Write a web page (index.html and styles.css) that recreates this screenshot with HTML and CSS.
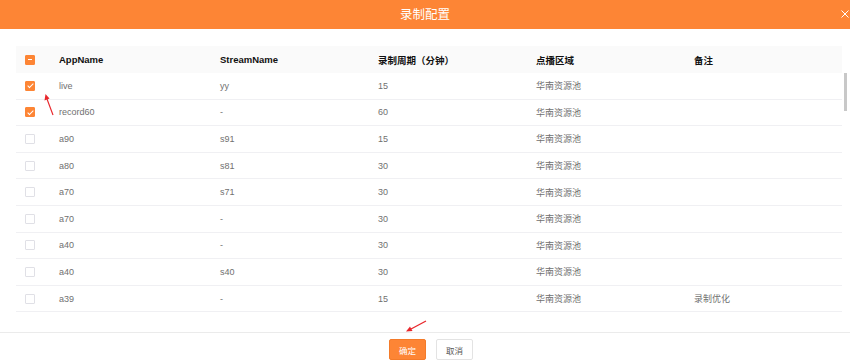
FILE: index.html
```html
<!DOCTYPE html>
<html lang="zh-CN">
<head>
    <meta charset="UTF-8">
    <meta name="viewport" content="width=device-width, initial-scale=1.0">
    <title>录制配置</title>
    <link rel="stylesheet" href="styles.css">
</head>
<body>
    <div class="dialog">
        <header class="dialog-header">
            <h1>录制配置</h1>
            <svg class="close" width="8" height="8" viewBox="0 0 8 8">
                <path d="M0.5 0.5 L7.5 7.5 M7.5 0.5 L0.5 7.5" stroke="#fff" stroke-width="1"/>
            </svg>
        </header>
        <main class="dialog-body">
            <div class="table">
                <div class="row head">
                    <div class="cell"><span class="box partial"></span></div>
                    <div class="cell">AppName</div>
                    <div class="cell">StreamName</div>
                    <div class="cell">录制周期（分钟）</div>
                    <div class="cell">点播区域</div>
                    <div class="cell">备注</div>
                </div>
                <div class="row">
                    <div class="cell"><span class="box checked"></span></div>
                    <div class="cell">live</div>
                    <div class="cell">yy</div>
                    <div class="cell">15</div>
                    <div class="cell">华南资源池</div>
                    <div class="cell"></div>
                </div>
                <div class="row">
                    <div class="cell"><span class="box checked"></span></div>
                    <div class="cell">record60</div>
                    <div class="cell">-</div>
                    <div class="cell">60</div>
                    <div class="cell">华南资源池</div>
                    <div class="cell"></div>
                </div>
                <div class="row">
                    <div class="cell"><span class="box"></span></div>
                    <div class="cell">a90</div>
                    <div class="cell">s91</div>
                    <div class="cell">15</div>
                    <div class="cell">华南资源池</div>
                    <div class="cell"></div>
                </div>
                <div class="row">
                    <div class="cell"><span class="box"></span></div>
                    <div class="cell">a80</div>
                    <div class="cell">s81</div>
                    <div class="cell">30</div>
                    <div class="cell">华南资源池</div>
                    <div class="cell"></div>
                </div>
                <div class="row">
                    <div class="cell"><span class="box"></span></div>
                    <div class="cell">a70</div>
                    <div class="cell">s71</div>
                    <div class="cell">30</div>
                    <div class="cell">华南资源池</div>
                    <div class="cell"></div>
                </div>
                <div class="row">
                    <div class="cell"><span class="box"></span></div>
                    <div class="cell">a70</div>
                    <div class="cell">-</div>
                    <div class="cell">30</div>
                    <div class="cell">华南资源池</div>
                    <div class="cell"></div>
                </div>
                <div class="row">
                    <div class="cell"><span class="box"></span></div>
                    <div class="cell">a40</div>
                    <div class="cell">-</div>
                    <div class="cell">30</div>
                    <div class="cell">华南资源池</div>
                    <div class="cell"></div>
                </div>
                <div class="row">
                    <div class="cell"><span class="box"></span></div>
                    <div class="cell">a40</div>
                    <div class="cell">s40</div>
                    <div class="cell">30</div>
                    <div class="cell">华南资源池</div>
                    <div class="cell"></div>
                </div>
                <div class="row">
                    <div class="cell"><span class="box"></span></div>
                    <div class="cell">a39</div>
                    <div class="cell">-</div>
                    <div class="cell">15</div>
                    <div class="cell">华南资源池</div>
                    <div class="cell">录制优化</div>
                </div>
                <div class="scrollbar"></div>
            </div>
        </main>
        <footer class="dialog-footer">
            <button class="btn primary">确定</button>
            <button class="btn">取消</button>
        </footer>
        <!-- red annotation arrows -->
        <svg class="marks" width="850" height="363" viewBox="0 0 850 363">
            <g stroke="#e8262b" stroke-width="1.2" fill="#e8262b">
                <line x1="53" y1="115" x2="47" y2="99"/>
                <polygon points="45.5,94 44.5,100.5 49.5,98.5" stroke="none"/>
                <line x1="426" y1="321" x2="411" y2="329"/>
                <polygon points="406,331.5 410,326.5 412.5,331" stroke="none"/>
            </g>
        </svg>
    </div>
</body>
</html>
```

FILE: styles.css
```css
body {
    margin: 0;
    font-family: "Liberation Sans", "Noto Sans CJK SC", sans-serif;
    background: #fff;
}
.dialog {
    position: relative;
    width: 850px;
    height: 363px;
    overflow: hidden;
}
.dialog-header {
    height: 29px;
    background-color: #fd8535;
    display: flex;
    align-items: center;
    justify-content: center;
    position: relative;
}
.dialog-header h1 {
    margin: 0 0 3px 0;
    color: #fff;
    font-size: 12.5px;
    font-weight: normal;
}
.close {
    position: absolute;
    right: 1px;
    top: 10px;
}
.dialog-body {
    height: 286px;
    padding: 17px 8px 0 16px;
    border-bottom: 1px solid #ebebeb;
}
.table {
    position: relative;
}
.row {
    display: grid;
    grid-template-columns: 43px 161px 158px 158px 158px 1fr;
    align-items: center;
    height: 25.6px;
    border-bottom: 1px solid #f0f0f3;
    font-size: 9px;
    color: #707070;
}
.row.head {
    height: 27px;
    border-bottom: none;
    background: #fafafa;
    color: #111;
    font-weight: bold;
    font-size: 9.5px;
}
.cell {
    white-space: nowrap;
}
.box {
    display: block;
    box-sizing: border-box;
    width: 10px;
    height: 10px;
    margin-left: 9px;
    border: 1px solid #e0e0e6;
    border-radius: 1px;
    background: #fff;
    position: relative;
}
.box.checked,
.box.partial {
    background: #fd8535;
    border-color: #fd8535;
}
.box.checked::after {
    content: "";
    position: absolute;
    left: 2.5px;
    top: 0.5px;
    width: 2px;
    height: 5px;
    border: solid #fff;
    border-width: 0 1px 1px 0;
    transform: rotate(45deg);
}
.box.partial::after {
    content: "";
    position: absolute;
    left: 2px;
    top: 3.5px;
    width: 4px;
    height: 1px;
    background: #fff;
}
.scrollbar {
    position: absolute;
    right: -5px;
    top: 27px;
    width: 3px;
    height: 38px;
    background: #c8c8c8;
}
.dialog-footer {
    display: flex;
    justify-content: center;
    gap: 10px;
    padding: 6px 0 0 12px;
}
.btn {
    height: 21px;
    width: 37px;
    padding: 0;
    font-size: 8.5px;
    font-family: "Noto Sans CJK SC", sans-serif;
    border: 1px solid #e3e3e3;
    border-radius: 2px;
    background: #fff;
    color: #555;
}
.btn.primary {
    background: #fd8535;
    border-color: #f47b2a;
    color: #fff;
}
.marks {
    position: absolute;
    left: 0;
    top: 0;
}
```
